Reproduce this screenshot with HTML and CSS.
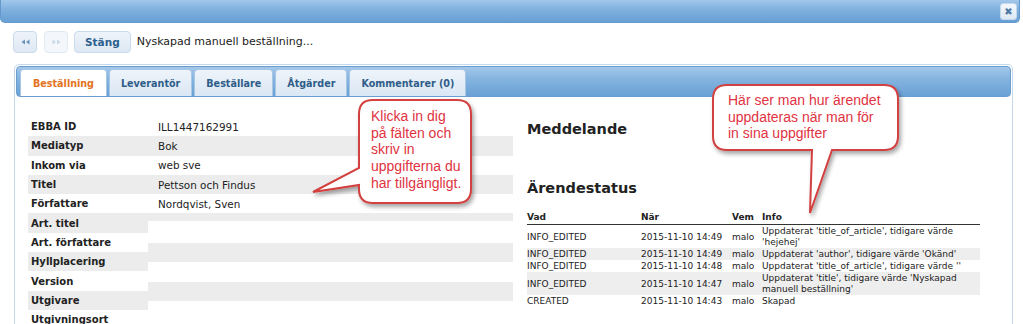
FILE: index.html
```html
<!DOCTYPE html>
<html lang="sv">
<head>
<meta charset="utf-8">
<title>Beställning</title>
<link rel="stylesheet" href="styles.css">
</head>
<body>
<div class="page">
  <div class="titlebar">
    <button class="close" type="button">&#x2716;</button>
  </div>

  <div class="toolbar">
    <button class="navbtn" type="button" aria-label="Föregående">
      <svg width="9" height="6" viewBox="0 0 9 6"><path d="M4 0.5 L0.5 3 L4 5.5 Z M8.5 0.5 L5 3 L8.5 5.5 Z" fill="#6b92bb"/></svg>
    </button>
    <button class="navbtn disabled" type="button" aria-label="Nästa">
      <svg width="9" height="6" viewBox="0 0 9 6"><path d="M0.5 0.5 L4 3 L0.5 5.5 Z M5 0.5 L8.5 3 L5 5.5 Z" fill="#c9d7e6"/></svg>
    </button>
    <button class="btn" type="button">Stäng</button>
    <span class="doc-title">Nyskapad manuell beställning...</span>
  </div>

  <div class="panel">
    <div class="tabbar">
      <div class="tab active">Beställning</div>
      <div class="tab">Leverantör</div>
      <div class="tab">Beställare</div>
      <div class="tab">Åtgärder</div>
      <div class="tab">Kommentarer (0)</div>
    </div>

    <div class="panel-body">
      <div class="fields">
        <div class="row"><div class="lbl">EBBA ID</div><div class="val">ILL1447162991</div></div>
        <div class="row alt"><div class="lbl">Mediatyp</div><div class="val">Bok</div></div>
        <div class="row"><div class="lbl">Inkom via</div><div class="val">web sve</div></div>
        <div class="row alt"><div class="lbl">Titel</div><div class="val">Pettson och Findus</div></div>
        <div class="row"><div class="lbl">Författare</div><div class="val">Nordqvist, Sven</div></div>
        <div class="row alt empty"><div class="lbl">Art. titel</div><div class="val"></div></div>
        <div class="row empty"><div class="lbl">Art. författare</div><div class="val"></div></div>
        <div class="row alt empty"><div class="lbl">Hyllplacering</div><div class="val"></div></div>
        <div class="row empty"><div class="lbl">Version</div><div class="val"></div></div>
        <div class="row alt empty"><div class="lbl">Utgivare</div><div class="val"></div></div>
        <div class="row empty"><div class="lbl">Utgivningsort</div><div class="val"></div></div>
      </div>

      <div class="side">
        <h2 class="heading">Meddelande</h2>
        <h2 class="heading status-heading">Ärendestatus</h2>
        <table class="log">
          <thead>
            <tr><th class="c-vad">Vad</th><th class="c-nar">När</th><th class="c-vem">Vem</th><th>Info</th></tr>
          </thead>
          <tbody>
            <tr><td>INFO_EDITED</td><td>2015-11-10 14:49</td><td>malo</td><td>Uppdaterat 'title_of_article', tidigare värde 'hejehej'</td></tr>
            <tr class="alt"><td>INFO_EDITED</td><td>2015-11-10 14:49</td><td>malo</td><td>Uppdaterat 'author', tidigare värde 'Okänd'</td></tr>
            <tr><td>INFO_EDITED</td><td>2015-11-10 14:48</td><td>malo</td><td>Uppdaterat 'title_of_article', tidigare värde ''</td></tr>
            <tr class="alt"><td>INFO_EDITED</td><td>2015-11-10 14:47</td><td>malo</td><td>Uppdaterat 'title', tidigare värde 'Nyskapad manuell beställning'</td></tr>
            <tr><td>CREATED</td><td>2015-11-10 14:43</td><td>malo</td><td>Skapad</td></tr>
          </tbody>
        </table>
      </div>
    </div>
  </div>

  <div class="callout callout-one">
    <svg class="bubble" width="185" height="125" viewBox="0 0 185 125" aria-hidden="true">
      <defs>
        <filter id="sh1" x="-20%" y="-20%" width="140%" height="140%">
          <feDropShadow dx="2" dy="3" stdDeviation="2" flood-color="#000" flood-opacity="0.35"/>
        </filter>
      </defs>
      <path d="M 73 8 H 157 Q 171 8 171 22 V 97 Q 171 111 157 111 H 73 Q 59 111 59 97 V 93 L 13 100 L 59 76 V 22 Q 59 8 73 8 Z" fill="#fff" stroke="#d2403f" stroke-width="2" filter="url(#sh1)"/>
    </svg>
    <div class="callout-text text-one">Klicka in dig<br>på fälten och<br>skriv in<br>uppgifterna du<br>har tillgängligt.</div>
  </div>

  <div class="callout callout-two">
    <svg class="bubble" width="205" height="145" viewBox="0 0 205 145" aria-hidden="true">
      <defs>
        <filter id="sh2" x="-20%" y="-20%" width="140%" height="140%">
          <feDropShadow dx="2" dy="3" stdDeviation="2" flood-color="#000" flood-opacity="0.35"/>
        </filter>
      </defs>
      <path d="M 22 7 H 179 Q 193 7 193 21 V 58 Q 193 72 179 72 H 127 L 105 135 L 107 72 H 22 Q 8 72 8 58 V 21 Q 8 7 22 7 Z" fill="#fff" stroke="#d2403f" stroke-width="2" filter="url(#sh2)"/>
    </svg>
    <div class="callout-text text-two">Här ser man hur ärendet<br>uppdateras när man för<br>in sina uppgifter</div>
  </div>
</div>
</body>
</html>
```

FILE: styles.css
```css
* { box-sizing: border-box; }

html, body {
  margin: 0;
  padding: 0;
  background: #ffffff;
}

body {
  width: 1023px;
  height: 324px;
  overflow: hidden;
  font-family: "DejaVu Sans", "Liberation Sans", sans-serif;
  color: #222;
}

.page {
  position: relative;
  width: 1023px;
  height: 324px;
}

/* Title bar */
.titlebar {
  height: 23px;
  margin-right: 3px;
  background: linear-gradient(to bottom, #a2c7ea 0%, #82b2df 40%, #689fd4 100%);
  border: 1px solid #6399cc;
  border-top: none;
  border-radius: 0 0 5px 5px;
  display: flex;
  justify-content: flex-end;
  align-items: center;
  padding-right: 2px;
}

.close {
  width: 17px;
  height: 17px;
  padding: 0;
  border: 1px solid #c4d9ee;
  border-radius: 3px;
  background: linear-gradient(#f4f8fc, #dde9f5);
  color: #4f7aa6;
  font-size: 10px;
  line-height: 15px;
  font-family: "DejaVu Sans", sans-serif;
  text-align: center;
}

/* Toolbar */
.toolbar {
  display: flex;
  align-items: center;
  padding: 7px 0 0 13px;
  height: 30px;
}

.navbtn {
  width: 24px;
  height: 22px;
  margin-right: 7px;
  padding: 0;
  border: 1px solid #c9dbed;
  border-radius: 4px;
  background: linear-gradient(#edf3f9, #dfe9f4);
  display: flex;
  align-items: center;
  justify-content: center;
}

.navbtn.disabled {
  margin-right: 6px;
  background: #f3f7fb;
  border-color: #e0e9f2;
}

.btn {
  height: 22px;
  padding: 0 10px;
  border: 1px solid #c9dbed;
  border-radius: 4px;
  background: linear-gradient(#eef4fa, #dde8f4);
  color: #2e5f8e;
  font-family: "DejaVu Sans", sans-serif;
  font-weight: bold;
  font-size: 10.5px;
}

.doc-title {
  margin-left: 6px;
  font-size: 11px;
  color: #222;
}

/* Tab panel */
.panel {
  margin: 11px 0 0 14px;
  width: 999px;
  height: 300px;
  border: 1px solid #c4d9ee;
  border-radius: 5px 5px 0 0;
  padding: 1px;
}

.tabbar {
  height: 31px;
  display: flex;
  align-items: flex-end;
  gap: 2px;
  padding-left: 3px;
  border-radius: 4px;
  background: linear-gradient(to bottom, #a4c8ea 0%, #85b4e0 40%, #6aa1d5 100%);
  border: 1px solid #6b9ecf;
}

.tab {
  height: 27px;
  padding: 0 11px;
  display: flex;
  align-items: center;
  font-size: 9.6px;
  font-weight: bold;
  color: #2f5d89;
  background: linear-gradient(#eef4fa, #dae7f4);
  border: 1px solid #a8c7e5;
  border-bottom: none;
  border-radius: 4px 4px 0 0;
}

.tab.active {
  background: #ffffff;
  color: #e3721a;
  padding: 0 12px;
}

.panel-body {
  display: grid;
  grid-template-columns: 485px 1fr;
  column-gap: 14px;
  padding: 20px 12px 0 12px;
}

/* Field table */
.fields {
  display: flex;
  flex-direction: column;
}

.row {
  display: grid;
  grid-template-columns: 120px 1fr;
  height: 19.3px;
  align-items: center;
}

.lbl {
  height: 100%;
  display: flex;
  align-items: center;
  padding-left: 3px;
  font-size: 10px;
  font-weight: bold;
  color: #222;
}

.val {
  height: 100%;
  display: flex;
  align-items: center;
  padding-left: 10px;
  font-size: 10.4px;
  color: #222;
}

.row.alt .lbl,
.row.alt .val {
  background: #ececec;
}

.row.empty .val {
  background: transparent;
  position: relative;
}

.row.alt.empty .val::before {
  content: "";
  position: absolute;
  left: 0;
  right: 0;
  top: -9px;
  height: 19px;
  background: #ececec;
}

.row.alt.empty:nth-child(6) .val::before {
  top: 0;
  height: 8px;
}

/* Right side */
.side {
  padding-top: 3px;
}

.heading {
  margin: 0;
  font-size: 14.5px;
  line-height: 18px;
  font-weight: bold;
  color: #222;
}

.status-heading {
  margin-top: 41px;
}

.log {
  margin-top: 14px;
  width: 453px;
  border-collapse: collapse;
  font-size: 9px;
  color: #222;
}

.log th {
  text-align: left;
  font-weight: bold;
  line-height: 13px;
  padding: 0;
  border-bottom: 1px solid #333;
}

.log td {
  padding: 1px 0 0 0;
  line-height: 11px;
  vertical-align: middle;
}

.log .c-vad { width: 114px; }
.log .c-nar { width: 91px; }
.log .c-vem { width: 30px; }

.log tr.alt td {
  background: #eeeeee;
}

/* Callouts */
.callout {
  position: absolute;
}

.callout-one {
  left: 300px;
  top: 92px;
  width: 185px;
  height: 125px;
}

.callout-two {
  left: 705px;
  top: 78px;
  width: 205px;
  height: 145px;
}

.bubble {
  position: absolute;
  left: 0;
  top: 0;
}

.callout-text {
  position: absolute;
  font-family: "Liberation Sans", Arial, sans-serif;
  font-size: 14px;
  color: #e0333f;
  white-space: nowrap;
}

.text-one {
  left: 71px;
  top: 16px;
  line-height: 16.7px;
}

.text-two {
  left: 23px;
  top: 14px;
  line-height: 16.6px;
}
```
